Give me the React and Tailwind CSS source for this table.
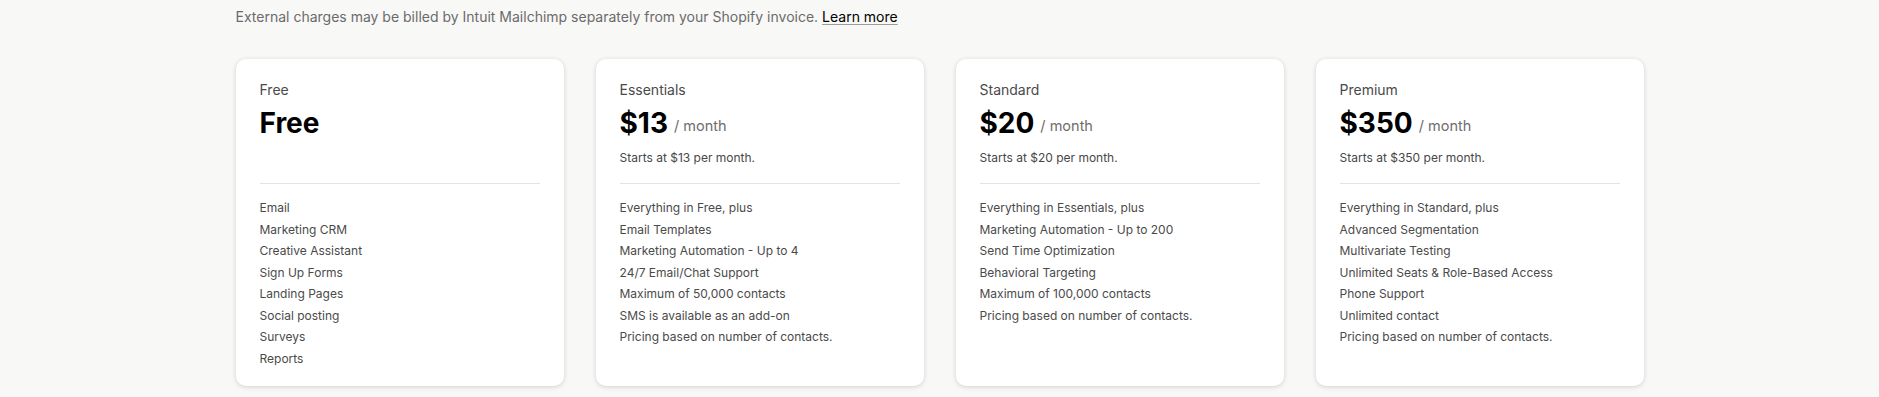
const plans = [
  {
    label: 'Free',
    price: 'Free',
    per: false,
    note: '',
    features: ['Email', 'Marketing CRM', 'Creative Assistant', 'Sign Up Forms', 'Landing Pages', 'Social posting', 'Surveys', 'Reports'],
  },
  {
    label: 'Essentials',
    price: '$13',
    per: true,
    note: 'Starts at $13 per month.',
    features: [
      'Everything in Free, plus',
      'Email Templates',
      'Marketing Automation - Up to 4',
      '24/7 Email/Chat Support',
      'Maximum of 50,000 contacts',
      'SMS is available as an add-on',
      'Pricing based on number of contacts.',
    ],
  },
  {
    label: 'Standard',
    price: '$20',
    per: true,
    note: 'Starts at $20 per month.',
    features: [
      'Everything in Essentials, plus',
      'Marketing Automation - Up to 200',
      'Send Time Optimization',
      'Behavioral Targeting',
      'Maximum of 100,000 contacts',
      'Pricing based on number of contacts.',
    ],
  },
  {
    label: 'Premium',
    price: '$350',
    per: true,
    note: 'Starts at $350 per month.',
    features: [
      'Everything in Standard, plus',
      'Advanced Segmentation',
      'Multivariate Testing',
      'Unlimited Seats & Role-Based Access',
      'Phone Support',
      'Unlimited contact',
      'Pricing based on number of contacts.',
    ],
  },
]

function PlanCard({ plan }) {
  return (
    <div className="bg-white rounded-[10px] shadow-[0_1px_5px_rgba(0,0,0,0.16)] px-6 pt-[21px] pb-[17px]">
      <div className="text-[14px] leading-5 text-[#4a4a4a]">{plan.label}</div>
      <div className="mt-[5px] h-9 leading-9 whitespace-nowrap">
        <span className="text-[28px] font-bold text-black">{plan.price}</span>
        {plan.per && <span className="ml-[6px] text-[14.5px] text-[#6d6d6d] align-[2px]">/ month</span>}
      </div>
      <div className="mt-[7px] h-5 text-[12px] leading-5 text-[#474747]">{plan.note}</div>
      <div className="mt-[15px] border-t border-[#e3e3e3]" />
      <ul className="mt-[13px]">
        {plan.features.map(f => (
          <li key={f} className="text-[12px] leading-[21.5px] text-[#4a4a4a]">{f}</li>
        ))}
      </ul>
    </div>
  )
}

export default function App() {
  return (
    <div className="min-h-[397px] bg-[#f8f8f7] font-['Inter',sans-serif]">
      <div className="w-[1408px] mx-auto pt-[7px]">
        <p className="text-[14px] leading-5 text-[#6b6b6b]">
          External charges may be billed by Intuit Mailchimp separately from your Shopify invoice.{' '}
          <a href="#" className="text-black underline underline-offset-2 decoration-[#9a9a9a]">Learn more</a>
        </p>
        <div className="mt-[32px] grid grid-cols-4 gap-8">
          {plans.map(p => (
            <PlanCard key={p.label} plan={p} />
          ))}
        </div>
      </div>
    </div>
  )
}
